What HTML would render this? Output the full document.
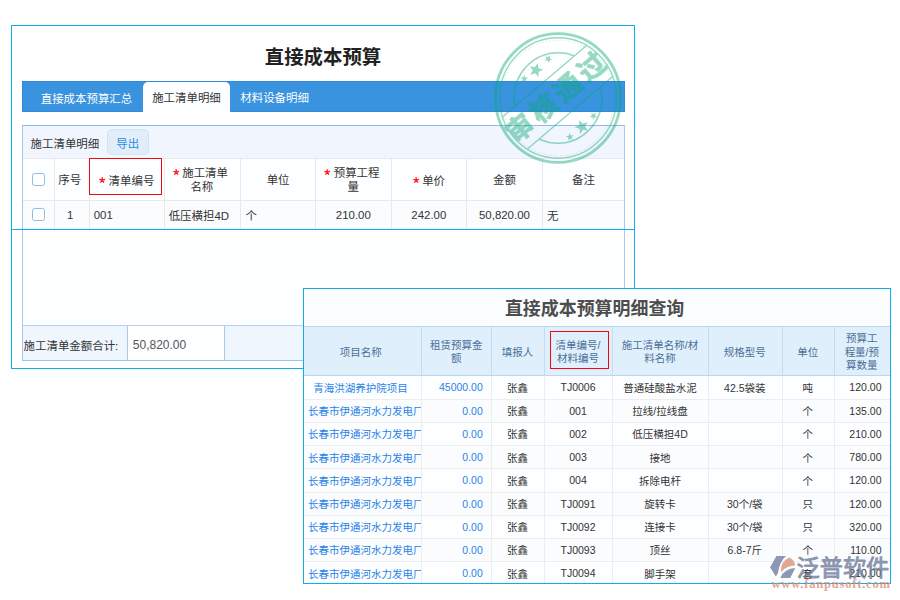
<!DOCTYPE html>
<html lang="zh"><head><meta charset="utf-8"><title>直接成本预算</title>
<style>
html,body{margin:0;padding:0;background:#fff;}
body{width:900px;height:600px;position:relative;overflow:hidden;font-family:"Liberation Sans","Noto Sans CJK SC",sans-serif;font-size:11.45px;}
.a{position:absolute;box-sizing:content-box;}
.c{display:flex;align-items:center;justify-content:center;text-align:center;}
.l{display:flex;align-items:center;justify-content:flex-start;}
.r{display:flex;align-items:center;justify-content:flex-end;}
.c>span.w,.l>span.w,.r>span.w{display:block;white-space:nowrap;}
.s2{font-size:10.5px;}
.big{font-weight:bold;}
.ast{display:inline-block;width:6.4px;height:6.4px;vertical-align:0.1em;margin-right:3.2px;overflow:visible;}
.p1{border:1px solid #0daeea;box-sizing:border-box;background:#fff;}
.p2{border:1px solid #0daeea;box-sizing:border-box;background:#fff;}
</style></head>
<body>
<div class="a p1" style="left:11px;top:25px;width:624px;height:344px;"></div>
<div class="a c big" style="left:12px;top:39px;width:622px;height:32px;font-size:19.4px;color:#222;"><span class="w">直接成本预算</span></div>
<div class="a " style="left:22px;top:80.7px;width:602.6px;height:31.3px;background:#3993de;border:1px solid #3289d8;box-sizing:border-box;"></div>
<div class="a c" style="left:21.5px;top:82px;width:121px;height:31px;color:#fff;padding-left:9px;box-sizing:border-box;"><span class="w">直接成本预算汇总</span></div>
<div class="a c" style="left:143px;top:82px;width:87px;height:30px;background:#fdfeff;border-radius:5px 5px 0 0;color:#333;"><span class="w"></span></div>
<div class="a c" style="left:143px;top:81.3px;width:87px;height:31px;color:#333;"><span class="w">施工清单明细</span></div>
<div class="a c" style="left:229.6px;top:81.8px;width:90px;height:31px;color:#fff;"><span class="w">材料设备明细</span></div>
<div class="a " style="left:22px;top:125px;width:603px;height:236px;border:1px solid #a8c9ea;border-top-color:#8fbce8;box-sizing:border-box;background:#fdfeff;"></div>
<div class="a " style="left:23px;top:126px;width:601px;height:32px;background:#f0f5fe;"></div>
<div class="a l" style="left:30.6px;top:127px;width:74px;height:32px;color:#333;"><span class="w">施工清单明细</span></div>
<div class="a c" style="left:107px;top:129px;width:42px;height:26px;background:#e1eefa;border:1px solid #cfe3f6;border-radius:5px;box-sizing:border-box;"><span class="w"></span></div>
<div class="a c" style="left:106.7px;top:130.1px;width:42px;height:26px;color:#2b8be0;"><span class="w">导出</span></div>
<div class="a " style="left:23px;top:158px;width:601px;height:42px;background:#fdfeff;border-top:1px solid #e7e8ea;box-sizing:border-box;"></div>
<div class="a " style="left:23px;top:200px;width:601px;height:29px;background:#fafcfe;border-top:1px solid #e7e8ea;box-sizing:border-box;"></div>
<div class="a c" style="left:23.0px;top:160.0px;width:30.700000000000003px;height:41px;color:#333;line-height:13.6px;"><span class="w"></span></div>
<div class="a c" style="left:23.0px;top:201px;width:30.700000000000003px;height:28px;color:#333;"><span class="w"></span></div>
<div class="a " style="left:53.7px;top:158px;width:1px;height:71px;background:#e7e8ea;"></div>
<div class="a c" style="left:52.7px;top:160.0px;width:34.0px;height:41px;color:#333;line-height:13.6px;"><span class="w">序号</span></div>
<div class="a c" style="left:53.2px;top:201px;width:34.0px;height:28px;color:#333;"><span class="w">1</span></div>
<div class="a " style="left:88.7px;top:158px;width:1px;height:71px;background:#e7e8ea;"></div>
<div class="a c" style="left:89.7px;top:161.3px;width:73.99999999999999px;height:41px;color:#333;line-height:13.6px;"><span class="w"><svg class="ast" viewBox="-3.2 -3.2 6.4 6.4"><path d="M0 0V-3M0 0L2.85 -0.93M0 0L1.76 2.43M0 0L-1.76 2.43M0 0L-2.85 -0.93" stroke="#ff1a1a" stroke-width="1.35" fill="none"/></svg>清单编号</span></div>
<div class="a l" style="left:89.7px;top:201px;width:73.99999999999999px;height:28px;color:#333;padding-left:4px;box-sizing:border-box;"><span class="w">001</span></div>
<div class="a " style="left:163.7px;top:158px;width:1px;height:71px;background:#e7e8ea;"></div>
<div class="a c" style="left:164.0px;top:160.0px;width:75.70000000000002px;height:41px;color:#333;line-height:13.6px;"><span class="w"><svg class="ast" viewBox="-3.2 -3.2 6.4 6.4"><path d="M0 0V-3M0 0L2.85 -0.93M0 0L1.76 2.43M0 0L-1.76 2.43M0 0L-2.85 -0.93" stroke="#ff1a1a" stroke-width="1.35" fill="none"/></svg>施工清单<span style="display:inline-block;width:3px"></span><br>名称</span></div>
<div class="a l" style="left:164.7px;top:201px;width:75.70000000000002px;height:28px;color:#333;padding-left:4px;box-sizing:border-box;"><span class="w">低压横担4D</span></div>
<div class="a " style="left:240.4px;top:158px;width:1px;height:71px;background:#e7e8ea;"></div>
<div class="a c" style="left:241.4px;top:160.0px;width:73.4px;height:41px;color:#333;line-height:13.6px;"><span class="w">单位</span></div>
<div class="a l" style="left:241.4px;top:201px;width:73.4px;height:28px;color:#333;padding-left:4px;box-sizing:border-box;"><span class="w">个</span></div>
<div class="a " style="left:314.8px;top:158px;width:1px;height:71px;background:#e7e8ea;"></div>
<div class="a c" style="left:315.8px;top:160.0px;width:75.0px;height:41px;color:#333;line-height:13.6px;"><span class="w"><svg class="ast" viewBox="-3.2 -3.2 6.4 6.4"><path d="M0 0V-3M0 0L2.85 -0.93M0 0L1.76 2.43M0 0L-1.76 2.43M0 0L-2.85 -0.93" stroke="#ff1a1a" stroke-width="1.35" fill="none"/></svg>预算工程<span style="display:inline-block;width:3px"></span><br>量</span></div>
<div class="a c" style="left:315.8px;top:201px;width:75.0px;height:28px;color:#333;"><span class="w">210.00</span></div>
<div class="a " style="left:390.8px;top:158px;width:1px;height:71px;background:#e7e8ea;"></div>
<div class="a c" style="left:391.8px;top:161.3px;width:74.09999999999997px;height:41px;color:#333;line-height:13.6px;"><span class="w"><svg class="ast" viewBox="-3.2 -3.2 6.4 6.4"><path d="M0 0V-3M0 0L2.85 -0.93M0 0L1.76 2.43M0 0L-1.76 2.43M0 0L-2.85 -0.93" stroke="#ff1a1a" stroke-width="1.35" fill="none"/></svg>单价</span></div>
<div class="a c" style="left:391.8px;top:201px;width:74.09999999999997px;height:28px;color:#333;"><span class="w">242.00</span></div>
<div class="a " style="left:465.9px;top:158px;width:1px;height:71px;background:#e7e8ea;"></div>
<div class="a c" style="left:466.9px;top:160.0px;width:75.10000000000002px;height:41px;color:#333;line-height:13.6px;"><span class="w">金额</span></div>
<div class="a c" style="left:466.9px;top:201px;width:75.10000000000002px;height:28px;color:#333;"><span class="w">50,820.00</span></div>
<div class="a " style="left:542.0px;top:158px;width:1px;height:71px;background:#e7e8ea;"></div>
<div class="a c" style="left:543.0px;top:160.0px;width:81.0px;height:41px;color:#333;line-height:13.6px;"><span class="w">备注</span></div>
<div class="a l" style="left:543.0px;top:201px;width:81.0px;height:28px;color:#333;padding-left:4px;box-sizing:border-box;"><span class="w">无</span></div>
<div class="a " style="left:32px;top:173px;width:13px;height:13px;border:1.4px solid #8dbde9;border-radius:2.6px;box-sizing:border-box;background:#fff;"></div>
<div class="a " style="left:32px;top:208px;width:13px;height:13px;border:1.4px solid #8dbde9;border-radius:2.6px;box-sizing:border-box;background:#fff;"></div>
<div class="a " style="left:89px;top:158px;width:73px;height:37px;border:1px solid #f5060c;box-sizing:border-box;"></div>
<div class="a " style="left:11px;top:229px;width:624px;height:1px;background:#0daeea;"></div>
<div class="a " style="left:23px;top:325px;width:601px;height:36px;background:#f0f6fd;border-top:1px solid #b5d3ee;border-bottom:1px solid #a0c4e8;box-sizing:border-box;"></div>
<div class="a " style="left:127px;top:326px;width:98px;height:34px;background:#fdfeff;border-left:1px solid #a8c9ea;border-right:1px solid #a8c9ea;box-sizing:border-box;"></div>
<div class="a l" style="left:23.6px;top:327.6px;width:104px;height:34px;color:#333;"><span class="w">施工清单金额合计:</span></div>
<div class="a l" style="left:132.8px;top:327.8px;width:90px;height:34px;color:#555;font-size:12px;"><span class="w">50,820.00</span></div>
<div class="a p2" style="left:303px;top:288px;width:588px;height:296px;"></div>
<div class="a " style="left:304px;top:289px;width:586px;height:37px;background:#fbfdff;"></div>
<div class="a c big" style="left:301.6px;top:288.8px;width:586px;height:37px;font-size:17.95px;color:#4d4d4d;"><span class="w">直接成本预算明细查询</span></div>
<div class="a " style="left:304px;top:326px;width:586px;height:49.8px;background:#e0effc;border-top:1px solid #b8d8f0;border-bottom:1px solid #b8d8f0;box-sizing:border-box;"></div>
<div class="a c s2" style="left:302.5px;top:328.2px;width:116.30000000000001px;height:48px;color:#4a6f96;line-height:13.2px;"><span class="w">项目名称</span></div>
<div class="a " style="left:421.3px;top:327px;width:1px;height:48px;background:#c3dcf2;"></div>
<div class="a c s2" style="left:421.7px;top:328.2px;width:69.0px;height:48px;color:#4a6f96;line-height:13.2px;"><span class="w">租赁预算金<br>额</span></div>
<div class="a " style="left:491.3px;top:327px;width:1px;height:48px;background:#c3dcf2;"></div>
<div class="a c s2" style="left:491.7px;top:328.2px;width:51.599999999999966px;height:48px;color:#4a6f96;line-height:13.2px;"><span class="w">填报人</span></div>
<div class="a " style="left:543.9px;top:327px;width:1px;height:48px;background:#c3dcf2;"></div>
<div class="a c s2" style="left:544.3px;top:328.2px;width:67.30000000000007px;height:48px;color:#4a6f96;line-height:13.2px;"><span class="w">清单编号/<br>材料编号</span></div>
<div class="a " style="left:612.2px;top:327px;width:1px;height:48px;background:#c3dcf2;"></div>
<div class="a c s2" style="left:612.6px;top:328.2px;width:94.69999999999993px;height:48px;color:#4a6f96;line-height:13.2px;"><span class="w">施工清单名称/材<br>料名称</span></div>
<div class="a " style="left:707.9px;top:327px;width:1px;height:48px;background:#c3dcf2;"></div>
<div class="a c s2" style="left:708.3px;top:328.2px;width:72.80000000000007px;height:48px;color:#4a6f96;line-height:13.2px;"><span class="w">规格型号</span></div>
<div class="a " style="left:781.7px;top:327px;width:1px;height:48px;background:#c3dcf2;"></div>
<div class="a c s2" style="left:782.1px;top:328.2px;width:51.19999999999993px;height:48px;color:#4a6f96;line-height:13.2px;"><span class="w">单位</span></div>
<div class="a " style="left:833.9px;top:327px;width:1px;height:48px;background:#c3dcf2;"></div>
<div class="a c s2" style="left:834.3px;top:328.2px;width:55.10000000000002px;height:48px;color:#4a6f96;line-height:13.2px;"><span class="w">预算工<br>程量/预<br>算数量</span></div>
<div class="a " style="left:304px;top:375.8px;width:586px;height:22.69999999999999px;background:#fdfeff;"></div>
<div class="a " style="left:304px;top:398.5px;width:586px;height:1px;background:#ecedef;"></div>
<div class="a c s2" style="left:302.4px;top:375.2px;width:116.30000000000001px;height:23.69999999999999px;color:#2a83e6;"><span class="w">青海洪湖养护院项目</span></div>
<div class="a " style="left:421.3px;top:375.8px;width:1px;height:23.69999999999999px;background:#ecedef;"></div>
<div class="a r s2" style="left:421.8px;top:375.2px;width:69.0px;height:23.69999999999999px;color:#2a83e6;padding-right:8px;box-sizing:border-box;"><span class="w">45000.00</span></div>
<div class="a " style="left:491.3px;top:375.8px;width:1px;height:23.69999999999999px;background:#ecedef;"></div>
<div class="a c s2" style="left:491.8px;top:375.2px;width:51.599999999999966px;height:23.69999999999999px;color:#333;"><span class="w">张鑫</span></div>
<div class="a " style="left:543.9px;top:375.8px;width:1px;height:23.69999999999999px;background:#ecedef;"></div>
<div class="a c s2" style="left:544.4px;top:375.2px;width:67.30000000000007px;height:23.69999999999999px;color:#333;"><span class="w">TJ0006</span></div>
<div class="a " style="left:612.2px;top:375.8px;width:1px;height:23.69999999999999px;background:#ecedef;"></div>
<div class="a c s2" style="left:612.7px;top:375.2px;width:94.69999999999993px;height:23.69999999999999px;color:#333;"><span class="w">普通硅酸盐水泥</span></div>
<div class="a " style="left:707.9px;top:375.8px;width:1px;height:23.69999999999999px;background:#ecedef;"></div>
<div class="a c s2" style="left:708.4px;top:375.2px;width:72.80000000000007px;height:23.69999999999999px;color:#333;"><span class="w">42.5袋装</span></div>
<div class="a " style="left:781.7px;top:375.8px;width:1px;height:23.69999999999999px;background:#ecedef;"></div>
<div class="a c s2" style="left:782.2px;top:375.2px;width:51.19999999999993px;height:23.69999999999999px;color:#333;"><span class="w">吨</span></div>
<div class="a " style="left:833.9px;top:375.8px;width:1px;height:23.69999999999999px;background:#ecedef;"></div>
<div class="a r s2" style="left:834.4px;top:375.2px;width:55.10000000000002px;height:23.69999999999999px;color:#333;padding-right:8px;box-sizing:border-box;"><span class="w">120.00</span></div>
<div class="a " style="left:304px;top:399.5px;width:586px;height:22.399999999999977px;background:#fafcfe;"></div>
<div class="a " style="left:304px;top:421.9px;width:586px;height:1px;background:#ecedef;"></div>
<div class="a l s2" style="left:304.5px;top:398.9px;width:116.30000000000001px;height:23.399999999999977px;color:#2a83e6;padding-left:3.6px;box-sizing:border-box;overflow:hidden;white-space:nowrap;"><span class="w">长春市伊通河水力发电厂</span></div>
<div class="a " style="left:421.3px;top:399.5px;width:1px;height:23.399999999999977px;background:#ecedef;"></div>
<div class="a r s2" style="left:421.8px;top:398.9px;width:69.0px;height:23.399999999999977px;color:#2a83e6;padding-right:8px;box-sizing:border-box;"><span class="w">0.00</span></div>
<div class="a " style="left:491.3px;top:399.5px;width:1px;height:23.399999999999977px;background:#ecedef;"></div>
<div class="a c s2" style="left:491.8px;top:398.9px;width:51.599999999999966px;height:23.399999999999977px;color:#333;"><span class="w">张鑫</span></div>
<div class="a " style="left:543.9px;top:399.5px;width:1px;height:23.399999999999977px;background:#ecedef;"></div>
<div class="a c s2" style="left:544.4px;top:398.9px;width:67.30000000000007px;height:23.399999999999977px;color:#333;"><span class="w">001</span></div>
<div class="a " style="left:612.2px;top:399.5px;width:1px;height:23.399999999999977px;background:#ecedef;"></div>
<div class="a c s2" style="left:612.7px;top:398.9px;width:94.69999999999993px;height:23.399999999999977px;color:#333;"><span class="w">拉线/拉线盘</span></div>
<div class="a " style="left:707.9px;top:399.5px;width:1px;height:23.399999999999977px;background:#ecedef;"></div>
<div class="a c s2" style="left:708.4px;top:398.9px;width:72.80000000000007px;height:23.399999999999977px;color:#333;"><span class="w"></span></div>
<div class="a " style="left:781.7px;top:399.5px;width:1px;height:23.399999999999977px;background:#ecedef;"></div>
<div class="a c s2" style="left:782.2px;top:398.9px;width:51.19999999999993px;height:23.399999999999977px;color:#333;"><span class="w">个</span></div>
<div class="a " style="left:833.9px;top:399.5px;width:1px;height:23.399999999999977px;background:#ecedef;"></div>
<div class="a r s2" style="left:834.4px;top:398.9px;width:55.10000000000002px;height:23.399999999999977px;color:#333;padding-right:8px;box-sizing:border-box;"><span class="w">135.00</span></div>
<div class="a " style="left:304px;top:422.9px;width:586px;height:22.30000000000001px;background:#fdfeff;"></div>
<div class="a " style="left:304px;top:445.2px;width:586px;height:1px;background:#ecedef;"></div>
<div class="a l s2" style="left:304.5px;top:422.29999999999995px;width:116.30000000000001px;height:23.30000000000001px;color:#2a83e6;padding-left:3.6px;box-sizing:border-box;overflow:hidden;white-space:nowrap;"><span class="w">长春市伊通河水力发电厂</span></div>
<div class="a " style="left:421.3px;top:422.9px;width:1px;height:23.30000000000001px;background:#ecedef;"></div>
<div class="a r s2" style="left:421.8px;top:422.29999999999995px;width:69.0px;height:23.30000000000001px;color:#2a83e6;padding-right:8px;box-sizing:border-box;"><span class="w">0.00</span></div>
<div class="a " style="left:491.3px;top:422.9px;width:1px;height:23.30000000000001px;background:#ecedef;"></div>
<div class="a c s2" style="left:491.8px;top:422.29999999999995px;width:51.599999999999966px;height:23.30000000000001px;color:#333;"><span class="w">张鑫</span></div>
<div class="a " style="left:543.9px;top:422.9px;width:1px;height:23.30000000000001px;background:#ecedef;"></div>
<div class="a c s2" style="left:544.4px;top:422.29999999999995px;width:67.30000000000007px;height:23.30000000000001px;color:#333;"><span class="w">002</span></div>
<div class="a " style="left:612.2px;top:422.9px;width:1px;height:23.30000000000001px;background:#ecedef;"></div>
<div class="a c s2" style="left:612.7px;top:422.29999999999995px;width:94.69999999999993px;height:23.30000000000001px;color:#333;"><span class="w">低压横担4D</span></div>
<div class="a " style="left:707.9px;top:422.9px;width:1px;height:23.30000000000001px;background:#ecedef;"></div>
<div class="a c s2" style="left:708.4px;top:422.29999999999995px;width:72.80000000000007px;height:23.30000000000001px;color:#333;"><span class="w"></span></div>
<div class="a " style="left:781.7px;top:422.9px;width:1px;height:23.30000000000001px;background:#ecedef;"></div>
<div class="a c s2" style="left:782.2px;top:422.29999999999995px;width:51.19999999999993px;height:23.30000000000001px;color:#333;"><span class="w">个</span></div>
<div class="a " style="left:833.9px;top:422.9px;width:1px;height:23.30000000000001px;background:#ecedef;"></div>
<div class="a r s2" style="left:834.4px;top:422.29999999999995px;width:55.10000000000002px;height:23.30000000000001px;color:#333;padding-right:8px;box-sizing:border-box;"><span class="w">210.00</span></div>
<div class="a " style="left:304px;top:446.2px;width:586px;height:22.19999999999999px;background:#fafcfe;"></div>
<div class="a " style="left:304px;top:468.4px;width:586px;height:1px;background:#ecedef;"></div>
<div class="a l s2" style="left:304.5px;top:445.59999999999997px;width:116.30000000000001px;height:23.19999999999999px;color:#2a83e6;padding-left:3.6px;box-sizing:border-box;overflow:hidden;white-space:nowrap;"><span class="w">长春市伊通河水力发电厂</span></div>
<div class="a " style="left:421.3px;top:446.2px;width:1px;height:23.19999999999999px;background:#ecedef;"></div>
<div class="a r s2" style="left:421.8px;top:445.59999999999997px;width:69.0px;height:23.19999999999999px;color:#2a83e6;padding-right:8px;box-sizing:border-box;"><span class="w">0.00</span></div>
<div class="a " style="left:491.3px;top:446.2px;width:1px;height:23.19999999999999px;background:#ecedef;"></div>
<div class="a c s2" style="left:491.8px;top:445.59999999999997px;width:51.599999999999966px;height:23.19999999999999px;color:#333;"><span class="w">张鑫</span></div>
<div class="a " style="left:543.9px;top:446.2px;width:1px;height:23.19999999999999px;background:#ecedef;"></div>
<div class="a c s2" style="left:544.4px;top:445.59999999999997px;width:67.30000000000007px;height:23.19999999999999px;color:#333;"><span class="w">003</span></div>
<div class="a " style="left:612.2px;top:446.2px;width:1px;height:23.19999999999999px;background:#ecedef;"></div>
<div class="a c s2" style="left:612.7px;top:445.59999999999997px;width:94.69999999999993px;height:23.19999999999999px;color:#333;"><span class="w">接地</span></div>
<div class="a " style="left:707.9px;top:446.2px;width:1px;height:23.19999999999999px;background:#ecedef;"></div>
<div class="a c s2" style="left:708.4px;top:445.59999999999997px;width:72.80000000000007px;height:23.19999999999999px;color:#333;"><span class="w"></span></div>
<div class="a " style="left:781.7px;top:446.2px;width:1px;height:23.19999999999999px;background:#ecedef;"></div>
<div class="a c s2" style="left:782.2px;top:445.59999999999997px;width:51.19999999999993px;height:23.19999999999999px;color:#333;"><span class="w">个</span></div>
<div class="a " style="left:833.9px;top:446.2px;width:1px;height:23.19999999999999px;background:#ecedef;"></div>
<div class="a r s2" style="left:834.4px;top:445.59999999999997px;width:55.10000000000002px;height:23.19999999999999px;color:#333;padding-right:8px;box-sizing:border-box;"><span class="w">780.00</span></div>
<div class="a " style="left:304px;top:469.4px;width:586px;height:22.200000000000045px;background:#fdfeff;"></div>
<div class="a " style="left:304px;top:491.6px;width:586px;height:1px;background:#ecedef;"></div>
<div class="a l s2" style="left:304.5px;top:468.79999999999995px;width:116.30000000000001px;height:23.200000000000045px;color:#2a83e6;padding-left:3.6px;box-sizing:border-box;overflow:hidden;white-space:nowrap;"><span class="w">长春市伊通河水力发电厂</span></div>
<div class="a " style="left:421.3px;top:469.4px;width:1px;height:23.200000000000045px;background:#ecedef;"></div>
<div class="a r s2" style="left:421.8px;top:468.79999999999995px;width:69.0px;height:23.200000000000045px;color:#2a83e6;padding-right:8px;box-sizing:border-box;"><span class="w">0.00</span></div>
<div class="a " style="left:491.3px;top:469.4px;width:1px;height:23.200000000000045px;background:#ecedef;"></div>
<div class="a c s2" style="left:491.8px;top:468.79999999999995px;width:51.599999999999966px;height:23.200000000000045px;color:#333;"><span class="w">张鑫</span></div>
<div class="a " style="left:543.9px;top:469.4px;width:1px;height:23.200000000000045px;background:#ecedef;"></div>
<div class="a c s2" style="left:544.4px;top:468.79999999999995px;width:67.30000000000007px;height:23.200000000000045px;color:#333;"><span class="w">004</span></div>
<div class="a " style="left:612.2px;top:469.4px;width:1px;height:23.200000000000045px;background:#ecedef;"></div>
<div class="a c s2" style="left:612.7px;top:468.79999999999995px;width:94.69999999999993px;height:23.200000000000045px;color:#333;"><span class="w">拆除电杆</span></div>
<div class="a " style="left:707.9px;top:469.4px;width:1px;height:23.200000000000045px;background:#ecedef;"></div>
<div class="a c s2" style="left:708.4px;top:468.79999999999995px;width:72.80000000000007px;height:23.200000000000045px;color:#333;"><span class="w"></span></div>
<div class="a " style="left:781.7px;top:469.4px;width:1px;height:23.200000000000045px;background:#ecedef;"></div>
<div class="a c s2" style="left:782.2px;top:468.79999999999995px;width:51.19999999999993px;height:23.200000000000045px;color:#333;"><span class="w">个</span></div>
<div class="a " style="left:833.9px;top:469.4px;width:1px;height:23.200000000000045px;background:#ecedef;"></div>
<div class="a r s2" style="left:834.4px;top:468.79999999999995px;width:55.10000000000002px;height:23.200000000000045px;color:#333;padding-right:8px;box-sizing:border-box;"><span class="w">120.00</span></div>
<div class="a " style="left:304px;top:492.6px;width:586px;height:22.199999999999932px;background:#fafcfe;"></div>
<div class="a " style="left:304px;top:514.8px;width:586px;height:1px;background:#ecedef;"></div>
<div class="a l s2" style="left:304.5px;top:492.0px;width:116.30000000000001px;height:23.199999999999932px;color:#2a83e6;padding-left:3.6px;box-sizing:border-box;overflow:hidden;white-space:nowrap;"><span class="w">长春市伊通河水力发电厂</span></div>
<div class="a " style="left:421.3px;top:492.6px;width:1px;height:23.199999999999932px;background:#ecedef;"></div>
<div class="a r s2" style="left:421.8px;top:492.0px;width:69.0px;height:23.199999999999932px;color:#2a83e6;padding-right:8px;box-sizing:border-box;"><span class="w">0.00</span></div>
<div class="a " style="left:491.3px;top:492.6px;width:1px;height:23.199999999999932px;background:#ecedef;"></div>
<div class="a c s2" style="left:491.8px;top:492.0px;width:51.599999999999966px;height:23.199999999999932px;color:#333;"><span class="w">张鑫</span></div>
<div class="a " style="left:543.9px;top:492.6px;width:1px;height:23.199999999999932px;background:#ecedef;"></div>
<div class="a c s2" style="left:544.4px;top:492.0px;width:67.30000000000007px;height:23.199999999999932px;color:#333;"><span class="w">TJ0091</span></div>
<div class="a " style="left:612.2px;top:492.6px;width:1px;height:23.199999999999932px;background:#ecedef;"></div>
<div class="a c s2" style="left:612.7px;top:492.0px;width:94.69999999999993px;height:23.199999999999932px;color:#333;"><span class="w">旋转卡</span></div>
<div class="a " style="left:707.9px;top:492.6px;width:1px;height:23.199999999999932px;background:#ecedef;"></div>
<div class="a c s2" style="left:708.4px;top:492.0px;width:72.80000000000007px;height:23.199999999999932px;color:#333;"><span class="w">30个/袋</span></div>
<div class="a " style="left:781.7px;top:492.6px;width:1px;height:23.199999999999932px;background:#ecedef;"></div>
<div class="a c s2" style="left:782.2px;top:492.0px;width:51.19999999999993px;height:23.199999999999932px;color:#333;"><span class="w">只</span></div>
<div class="a " style="left:833.9px;top:492.6px;width:1px;height:23.199999999999932px;background:#ecedef;"></div>
<div class="a r s2" style="left:834.4px;top:492.0px;width:55.10000000000002px;height:23.199999999999932px;color:#333;padding-right:8px;box-sizing:border-box;"><span class="w">120.00</span></div>
<div class="a " style="left:304px;top:515.8px;width:586px;height:22.0px;background:#fdfeff;"></div>
<div class="a " style="left:304px;top:537.8px;width:586px;height:1px;background:#ecedef;"></div>
<div class="a l s2" style="left:304.5px;top:515.1999999999999px;width:116.30000000000001px;height:23.0px;color:#2a83e6;padding-left:3.6px;box-sizing:border-box;overflow:hidden;white-space:nowrap;"><span class="w">长春市伊通河水力发电厂</span></div>
<div class="a " style="left:421.3px;top:515.8px;width:1px;height:23.0px;background:#ecedef;"></div>
<div class="a r s2" style="left:421.8px;top:515.1999999999999px;width:69.0px;height:23.0px;color:#2a83e6;padding-right:8px;box-sizing:border-box;"><span class="w">0.00</span></div>
<div class="a " style="left:491.3px;top:515.8px;width:1px;height:23.0px;background:#ecedef;"></div>
<div class="a c s2" style="left:491.8px;top:515.1999999999999px;width:51.599999999999966px;height:23.0px;color:#333;"><span class="w">张鑫</span></div>
<div class="a " style="left:543.9px;top:515.8px;width:1px;height:23.0px;background:#ecedef;"></div>
<div class="a c s2" style="left:544.4px;top:515.1999999999999px;width:67.30000000000007px;height:23.0px;color:#333;"><span class="w">TJ0092</span></div>
<div class="a " style="left:612.2px;top:515.8px;width:1px;height:23.0px;background:#ecedef;"></div>
<div class="a c s2" style="left:612.7px;top:515.1999999999999px;width:94.69999999999993px;height:23.0px;color:#333;"><span class="w">连接卡</span></div>
<div class="a " style="left:707.9px;top:515.8px;width:1px;height:23.0px;background:#ecedef;"></div>
<div class="a c s2" style="left:708.4px;top:515.1999999999999px;width:72.80000000000007px;height:23.0px;color:#333;"><span class="w">30个/袋</span></div>
<div class="a " style="left:781.7px;top:515.8px;width:1px;height:23.0px;background:#ecedef;"></div>
<div class="a c s2" style="left:782.2px;top:515.1999999999999px;width:51.19999999999993px;height:23.0px;color:#333;"><span class="w">只</span></div>
<div class="a " style="left:833.9px;top:515.8px;width:1px;height:23.0px;background:#ecedef;"></div>
<div class="a r s2" style="left:834.4px;top:515.1999999999999px;width:55.10000000000002px;height:23.0px;color:#333;padding-right:8px;box-sizing:border-box;"><span class="w">320.00</span></div>
<div class="a " style="left:304px;top:538.8px;width:586px;height:22.5px;background:#fafcfe;"></div>
<div class="a " style="left:304px;top:561.3px;width:586px;height:1px;background:#ecedef;"></div>
<div class="a l s2" style="left:304.5px;top:538.1999999999999px;width:116.30000000000001px;height:23.5px;color:#2a83e6;padding-left:3.6px;box-sizing:border-box;overflow:hidden;white-space:nowrap;"><span class="w">长春市伊通河水力发电厂</span></div>
<div class="a " style="left:421.3px;top:538.8px;width:1px;height:23.5px;background:#ecedef;"></div>
<div class="a r s2" style="left:421.8px;top:538.1999999999999px;width:69.0px;height:23.5px;color:#2a83e6;padding-right:8px;box-sizing:border-box;"><span class="w">0.00</span></div>
<div class="a " style="left:491.3px;top:538.8px;width:1px;height:23.5px;background:#ecedef;"></div>
<div class="a c s2" style="left:491.8px;top:538.1999999999999px;width:51.599999999999966px;height:23.5px;color:#333;"><span class="w">张鑫</span></div>
<div class="a " style="left:543.9px;top:538.8px;width:1px;height:23.5px;background:#ecedef;"></div>
<div class="a c s2" style="left:544.4px;top:538.1999999999999px;width:67.30000000000007px;height:23.5px;color:#333;"><span class="w">TJ0093</span></div>
<div class="a " style="left:612.2px;top:538.8px;width:1px;height:23.5px;background:#ecedef;"></div>
<div class="a c s2" style="left:612.7px;top:538.1999999999999px;width:94.69999999999993px;height:23.5px;color:#333;"><span class="w">顶丝</span></div>
<div class="a " style="left:707.9px;top:538.8px;width:1px;height:23.5px;background:#ecedef;"></div>
<div class="a c s2" style="left:708.4px;top:538.1999999999999px;width:72.80000000000007px;height:23.5px;color:#333;"><span class="w">6.8-7斤</span></div>
<div class="a " style="left:781.7px;top:538.8px;width:1px;height:23.5px;background:#ecedef;"></div>
<div class="a c s2" style="left:782.2px;top:538.1999999999999px;width:51.19999999999993px;height:23.5px;color:#333;"><span class="w">个</span></div>
<div class="a " style="left:833.9px;top:538.8px;width:1px;height:23.5px;background:#ecedef;"></div>
<div class="a r s2" style="left:834.4px;top:538.1999999999999px;width:55.10000000000002px;height:23.5px;color:#333;padding-right:8px;box-sizing:border-box;"><span class="w">110.00</span></div>
<div class="a " style="left:304px;top:562.3px;width:586px;height:20.700000000000045px;background:#fdfeff;"></div>
<div class="a l s2" style="left:304.5px;top:561.6999999999999px;width:116.30000000000001px;height:22.800000000000068px;color:#2a83e6;padding-left:3.6px;box-sizing:border-box;overflow:hidden;white-space:nowrap;"><span class="w">长春市伊通河水力发电厂</span></div>
<div class="a " style="left:421.3px;top:562.3px;width:1px;height:20.700000000000045px;background:#ecedef;"></div>
<div class="a r s2" style="left:421.8px;top:561.6999999999999px;width:69.0px;height:22.800000000000068px;color:#2a83e6;padding-right:8px;box-sizing:border-box;"><span class="w">0.00</span></div>
<div class="a " style="left:491.3px;top:562.3px;width:1px;height:20.700000000000045px;background:#ecedef;"></div>
<div class="a c s2" style="left:491.8px;top:561.6999999999999px;width:51.599999999999966px;height:22.800000000000068px;color:#333;"><span class="w">张鑫</span></div>
<div class="a " style="left:543.9px;top:562.3px;width:1px;height:20.700000000000045px;background:#ecedef;"></div>
<div class="a c s2" style="left:544.4px;top:561.6999999999999px;width:67.30000000000007px;height:22.800000000000068px;color:#333;"><span class="w">TJ0094</span></div>
<div class="a " style="left:612.2px;top:562.3px;width:1px;height:20.700000000000045px;background:#ecedef;"></div>
<div class="a c s2" style="left:612.7px;top:561.6999999999999px;width:94.69999999999993px;height:22.800000000000068px;color:#333;"><span class="w">脚手架</span></div>
<div class="a " style="left:707.9px;top:562.3px;width:1px;height:20.700000000000045px;background:#ecedef;"></div>
<div class="a c s2" style="left:708.4px;top:561.6999999999999px;width:72.80000000000007px;height:22.800000000000068px;color:#333;"><span class="w"></span></div>
<div class="a " style="left:781.7px;top:562.3px;width:1px;height:20.700000000000045px;background:#ecedef;"></div>
<div class="a c s2" style="left:782.2px;top:561.6999999999999px;width:51.19999999999993px;height:22.800000000000068px;color:#333;"><span class="w">套</span></div>
<div class="a " style="left:833.9px;top:562.3px;width:1px;height:20.700000000000045px;background:#ecedef;"></div>
<div class="a r s2" style="left:834.4px;top:561.6999999999999px;width:55.10000000000002px;height:22.800000000000068px;color:#333;padding-right:8px;box-sizing:border-box;"><span class="w">210.00</span></div>
<div class="a " style="left:550px;top:331.4px;width:59px;height:37.6px;border:1px solid #f5060c;box-sizing:border-box;"></div>
<svg class="a" style="left:487.5px;top:27.599999999999994px;opacity:.43" width="140" height="140" viewBox="-70 -70 140 140" fill="none" stroke="#0aa874">
<defs><clipPath id="cb"><path transform="rotate(-40.4)" d="M-80 -80H80V-21.5H-80ZM-80 19.0H80V80H-80Z"/></clipPath></defs>
<ellipse rx="62.5" ry="64.38" stroke-width="2.8"/>
<ellipse rx="58.5" ry="60.26" stroke-width="1.4"/>
<ellipse rx="56.2" ry="57.89" stroke-width="1" stroke-opacity=".6" stroke-dasharray="1 2.2"/>
<ellipse rx="44.0" ry="45.32" stroke-width="1.6" clip-path="url(#cb)"/>
<g transform="rotate(-40.4)">
<path d="M-55.48 -21.5H55.48M-56.38 19.0H56.38" stroke-width="1.4"/>
<text x="-62.55 -31.05 0.45 31.95" y="8.29" font-size="27.6" font-weight="bold" font-family="'Liberation Sans','Noto Sans CJK SC',sans-serif" fill="#0aa874" stroke="#0aa874" stroke-width="0.7" stroke-linejoin="round">审核通过</text><g fill="#0aa874" stroke="none"><polygon points="-0.86,-42.58 2.31,-38.44 7.36,-39.74 4.41,-35.45 7.21,-31.05 2.21,-32.53 -1.11,-28.50 -1.25,-33.72 -6.10,-35.63 -1.18,-37.37"/><polygon points="-15.20,-39.96 -13.02,-38.17 -10.52,-39.47 -11.56,-36.85 -9.55,-34.87 -12.36,-35.05 -13.62,-32.52 -14.32,-35.25 -17.11,-35.67 -14.73,-37.18"/><polygon points="17.55,-39.98 18.77,-37.44 21.58,-37.56 19.54,-35.62 20.52,-32.98 18.05,-34.33 15.84,-32.57 16.35,-35.34 14.00,-36.90 16.80,-37.27"/><polygon points="1.66,44.48 -1.51,40.34 -6.56,41.64 -3.61,37.35 -6.41,32.95 -1.41,34.43 1.91,30.40 2.05,35.62 6.90,37.53 1.98,39.27"/><polygon points="-15.85,41.38 -17.07,38.84 -19.88,38.96 -17.84,37.02 -18.82,34.38 -16.35,35.73 -14.14,33.97 -14.65,36.74 -12.30,38.30 -15.10,38.67"/><polygon points="17.40,40.16 15.22,38.37 12.72,39.67 13.76,37.05 11.75,35.07 14.56,35.25 15.82,32.72 16.52,35.45 19.31,35.87 16.93,37.38"/></g>
</g>
</svg>
<svg class="a" style="left:0;top:0" width="900" height="600" viewBox="0 0 900 600">
<g opacity=".92">
<path d="M770.1 567.2L776.4 556.1H786Q779.6 561.5 777.9 573.2L775.8 576.5Z" fill="#8590ae"/>
<path d="M780.9 572Q780.5 561.5 789.3 557.6Q794.6 560 795 565.4Q786.5 565.5 780.9 572Z" fill="#e0a088"/>
<path d="M780.3 578Q784.5 568.5 795.3 568.1L790.2 578Z" fill="#8590ae"/>
</g>
<text x="796.5 819.7 842.9 866.1" y="575.5" font-size="23.2" font-family="'Liberation Sans','Noto Sans CJK SC',sans-serif" opacity=".8" fill="#6f7c9b" stroke="#6f7c9b" stroke-width="0.88" stroke-linejoin="round">泛普软件</text>
</svg>
<div class="a" style="left:771.5px;top:576.5px;width:124px;height:15px;font-family:'Liberation Serif',serif;font-weight:bold;font-size:12.6px;letter-spacing:0.76px;color:#e08f78;opacity:.8;white-space:nowrap;line-height:15px;">www.fanpusoft.com</div>
<!--EXTRA-->
</body></html>
